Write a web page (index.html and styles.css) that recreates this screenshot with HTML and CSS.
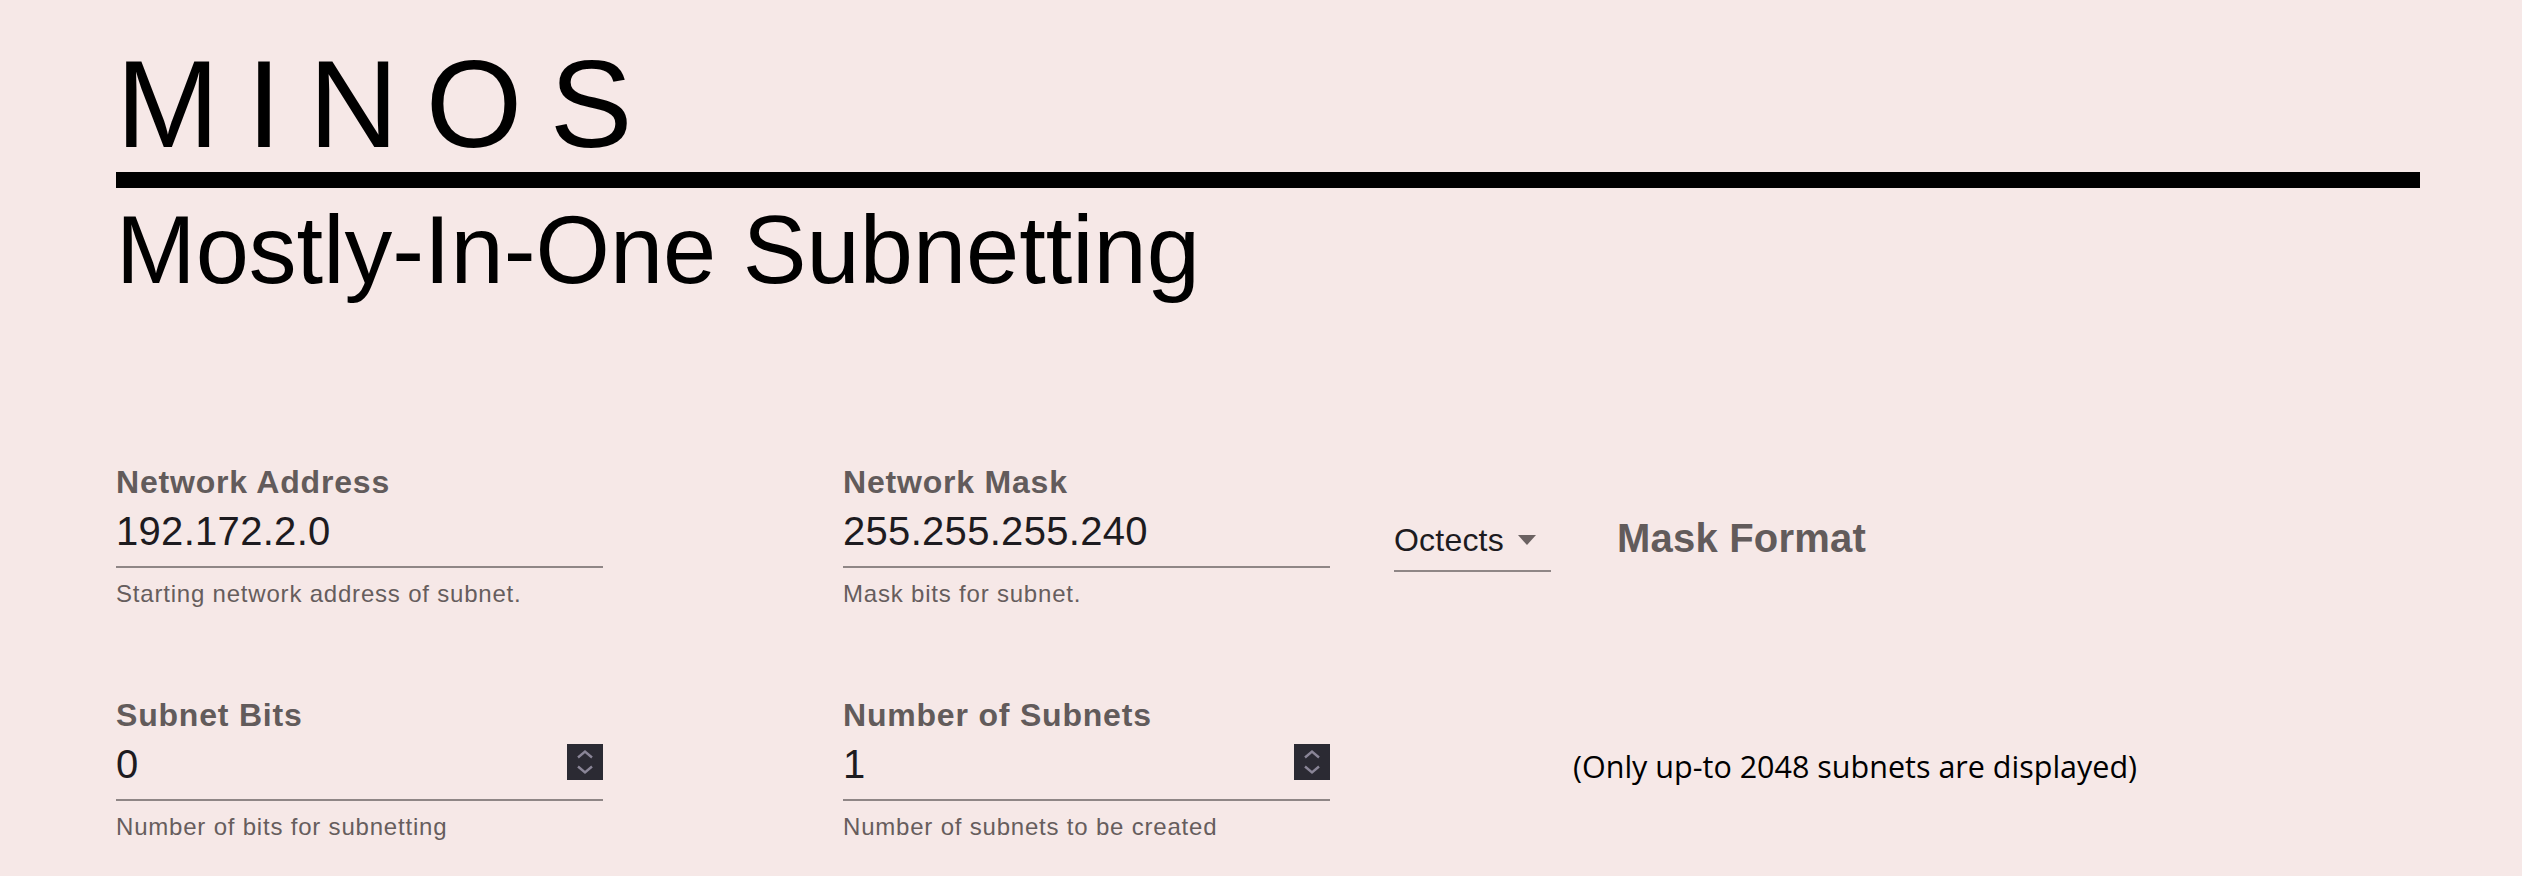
FILE: index.html
```html
<!DOCTYPE html>
<html lang="en">
<head>
<meta charset="utf-8">
<title>MINOS - Mostly-In-One Subnetting</title>
<link rel="stylesheet" href="styles.css">
</head>
<body>
<main class="page">
  <header class="masthead">
    <h1 class="brand">MINOS</h1>
    <div class="rule"></div>
    <h2 class="tagline">Mostly-In-One Subnetting</h2>
  </header>

  <section class="form">
    <div class="row">
      <div class="field">
        <label class="field-label" for="net-addr">Network Address</label>
        <div class="field-control">
          <input class="field-input" id="net-addr" type="text" value="192.172.2.0">
        </div>
        <div class="field-hint">Starting network address of subnet.</div>
      </div>

      <div class="mask-group">
        <div class="field">
          <label class="field-label" for="net-mask">Network Mask</label>
          <div class="field-control">
            <input class="field-input" id="net-mask" type="text" value="255.255.255.240">
          </div>
          <div class="field-hint">Mask bits for subnet.</div>
        </div>
        <div class="select">
          <span class="select-value">Octects</span>
          <span class="select-arrow"></span>
        </div>
        <div class="mask-format">Mask Format</div>
      </div>
    </div>

    <div class="row">
      <div class="field">
        <label class="field-label" for="subnet-bits">Subnet Bits</label>
        <div class="field-control">
          <input class="field-input" id="subnet-bits" type="text" inputmode="numeric" value="0">
          <span class="spinner">
            <svg viewBox="0 0 36 36" width="36" height="36" aria-hidden="true">
              <path d="M11 13.5 L18 7.5 L25 13.5" fill="none" stroke="#8a8597" stroke-width="2.4"/>
              <path d="M11 22.5 L18 28.5 L25 22.5" fill="none" stroke="#8a8597" stroke-width="2.4"/>
            </svg>
          </span>
        </div>
        <div class="field-hint">Number of bits for subnetting</div>
      </div>

      <div class="field">
        <label class="field-label" for="subnet-count">Number of Subnets</label>
        <div class="field-control">
          <input class="field-input" id="subnet-count" type="text" inputmode="numeric" value="1">
          <span class="spinner">
            <svg viewBox="0 0 36 36" width="36" height="36" aria-hidden="true">
              <path d="M11 13.5 L18 7.5 L25 13.5" fill="none" stroke="#8a8597" stroke-width="2.4"/>
              <path d="M11 22.5 L18 28.5 L25 22.5" fill="none" stroke="#8a8597" stroke-width="2.4"/>
            </svg>
          </span>
        </div>
        <div class="field-hint">Number of subnets to be created</div>
      </div>

      <div class="note">(Only up-to 2048 subnets are displayed)</div>
    </div>
  </section>
</main>
</body>
</html>
```

FILE: styles.css
```css
* {
  box-sizing: border-box;
}

html,
body {
  margin: 0;
  padding: 0;
}

body {
  background: #f6e8e7;
  color: #000;
  font-family: "Liberation Sans", Arial, Helvetica, sans-serif;
}

.page {
  padding: 42px 102px 0 116px;
}

.brand {
  margin: 0;
  font-size: 124px;
  line-height: 124px;
  font-weight: 400;
  letter-spacing: 27.5px;
}

.rule {
  height: 16px;
  margin-top: 6px;
  background: #000;
}

.tagline {
  margin: 14px 0 0;
  font-size: 95.6px;
  line-height: 96px;
  font-weight: 400;
}

.form {
  margin-top: 164px;
  display: flex;
  flex-direction: column;
  gap: 85px;
}

.row {
  display: flex;
  align-items: flex-start;
  gap: 240px;
}

.field {
  flex: none;
  width: 487px;
  display: flex;
  flex-direction: column;
}

.field-label {
  font-weight: 700;
  font-size: 32px;
  line-height: 40px;
  letter-spacing: 0.8px;
  color: #625b5b;
}

.field-control {
  margin-top: 5px;
  display: flex;
  align-items: flex-start;
  padding-bottom: 11px;
  border-bottom: 2px solid #8f8686;
}

.field-input {
  flex: 1;
  min-width: 0;
  height: 48px;
  margin: 0;
  padding: 0;
  border: 0;
  outline: none;
  background: transparent;
  font-family: "Liberation Sans", Arial, Helvetica, sans-serif;
  font-size: 40px;
  letter-spacing: 0.3px;
  color: #1d1b1f;
}

.spinner {
  flex: none;
  width: 36px;
  height: 36px;
  margin-top: 4px;
  background: #2b2a33;
  display: flex;
}

.field-hint {
  margin-top: 10px;
  font-size: 24px;
  line-height: 32px;
  letter-spacing: 0.8px;
  color: #665d5d;
}

.mask-group {
  display: flex;
  align-items: flex-start;
  gap: 64px;
}

.select {
  margin-top: 58px;
  width: 157px;
  display: flex;
  align-items: center;
  padding-bottom: 10px;
  border-bottom: 2px solid #8f8686;
}

.select-value {
  font-size: 32px;
  line-height: 40px;
  letter-spacing: 0.2px;
  color: #1d1b1f;
}

.select-arrow {
  margin-left: 14px;
  width: 0;
  height: 0;
  border-left: 9.5px solid transparent;
  border-right: 9.5px solid transparent;
  border-top: 10px solid #6b6262;
}

.mask-format {
  margin-top: 52px;
  margin-left: 2px;
  font-weight: 700;
  font-size: 40px;
  line-height: 48px;
  letter-spacing: 0.2px;
  color: #625b5b;
}

.note {
  margin-top: 51px;
  margin-left: 3px;
  font-family: "Open Sans", "Noto Sans", sans-serif;
  font-size: 30.5px;
  line-height: 40px;
  color: #000;
}
```
